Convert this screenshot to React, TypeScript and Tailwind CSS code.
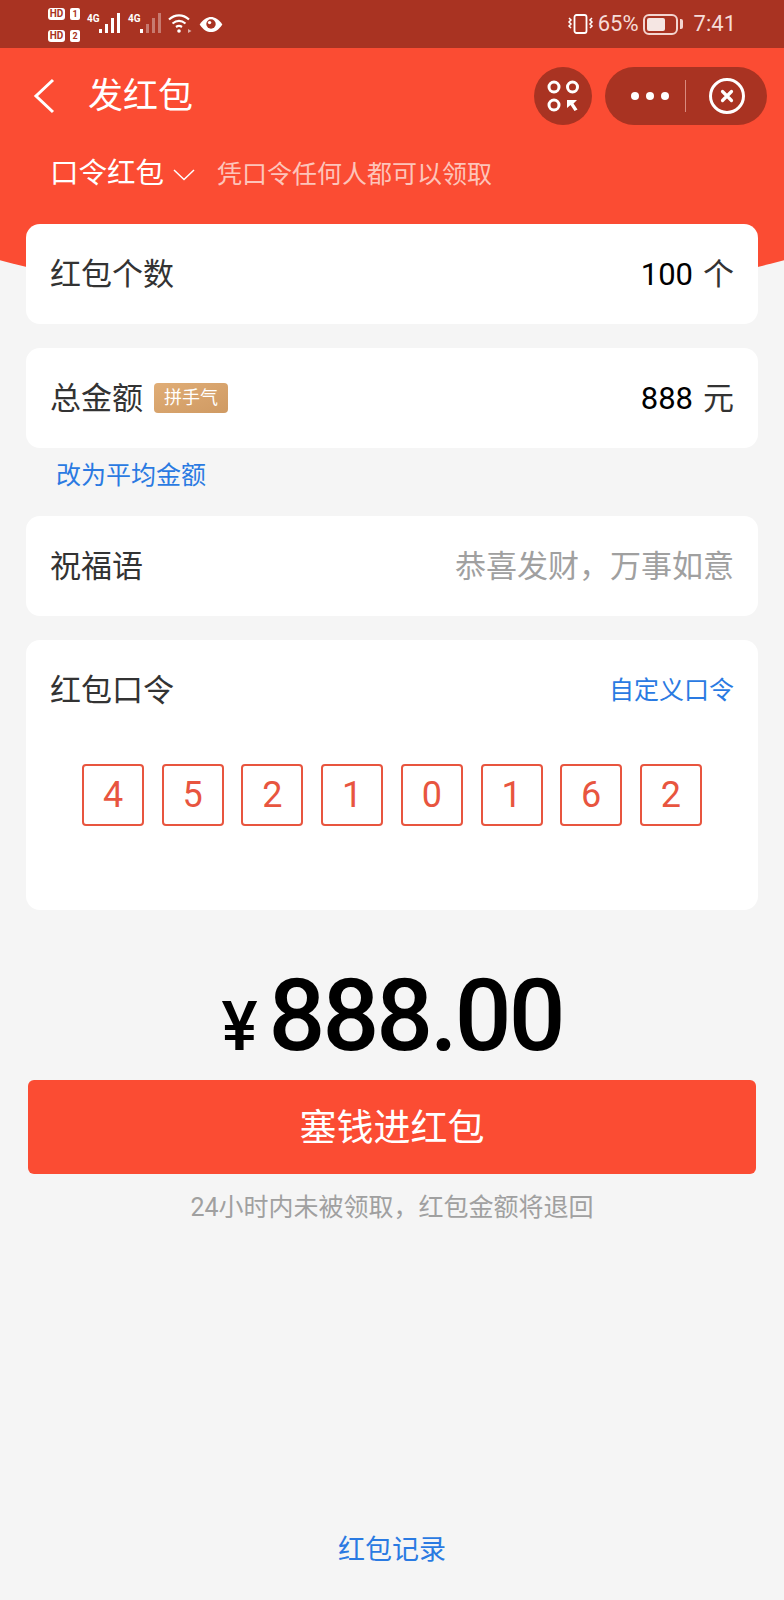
import React from 'react'

const cjk = { fontFamily: 'Roboto, "Noto Sans CJK SC", sans-serif' }

function SignalBars({ dim }: { dim?: boolean }) {
  const heights = [4, 9, 15, 20]
  return (
    <div className="flex items-end gap-[3px] h-[20px]">
      {heights.map((h, i) => (
        <svg key={i} width="3" height={h} className="block">
          <rect width="3" height={h} fill="#fff" opacity={dim && i > 0 ? 0.35 : 1} />
        </svg>
      ))}
    </div>
  )
}

function Simcard({ n }: { n: string }) {
  return (
    <div className="flex items-center gap-[5px] h-[12px]">
      <span className="flex items-center justify-center w-[17px] h-[12px] bg-white rounded-[3px] text-[10px] leading-none font-bold text-[#a93322]">HD</span>
      <span className="flex items-center justify-center w-[10px] h-[12px] bg-white rounded-[2px] text-[9px] leading-none font-bold text-[#a93322]">{n}</span>
    </div>
  )
}

function StatusBar() {
  return (
    <div className="flex items-center h-12 bg-[#a93322] pl-[48px] pr-[48px] text-white">
      <div className="flex flex-col gap-[10px] mt-[2px]">
        <Simcard n="1" />
        <Simcard n="2" />
      </div>
      <div className="flex items-end h-[20px] ml-[7px] mb-[2px]">
        <span className="w-[12px] text-[10px] leading-none font-bold self-start mt-[1px]">4G</span>
        <SignalBars />
      </div>
      <div className="flex items-end h-[20px] ml-[8px] mb-[2px]">
        <span className="w-[12px] text-[10px] leading-none font-bold self-start mt-[1px]">4G</span>
        <SignalBars dim />
      </div>
      <svg width="24" height="20" viewBox="0 0 24 20" className="ml-[7px] mb-[2px]" fill="none" stroke="#fff" strokeWidth="2.200">
        <path d="M1 6.500c6-5.500 14-5.500 20 0" />
        <path d="M4.500 10.500c4-3.200 9-3.200 13 0" />
        <path d="M8 14c2-1.400 4-1.400 6 0" />
        <circle cx="11" cy="18" r="1.800" fill="#fff" stroke="none" />
        <path d="M20 16l3.500 2-3.500 2z" fill="#fff" stroke="none" opacity="0.6" />
      </svg>
      <svg width="26" height="17" viewBox="0 0 26 18" className="ml-[6px] mb-[-1px]">
        <path d="M1 9C5 3 9 1 13 1s8 2 12 8c-4 6-8 8-12 8S5 15 1 9z" fill="#fff" />
        <circle cx="13" cy="8.500" r="5" fill="#a93322" />
        <circle cx="11.500" cy="7" r="1.800" fill="#fff" />
      </svg>
      <div className="ml-auto flex items-center">
        <svg width="27" height="20" viewBox="0 0 27 20" fill="none" stroke="#fff" strokeWidth="1.500">
          <rect x="7.500" y="1" width="12" height="18" rx="2" strokeWidth="1.800" />
          <path d="M2 4l2 2-2 2 2 2-2 2 2 2M25 4l-2 2 2 2-2 2 2 2-2 2" />
        </svg>
        <span className="ml-[4px] text-[22px] leading-none text-[#f6dcd8]" style={cjk}>65%</span>
        <div className="ml-[4px] flex items-center">
          <div className="w-[35px] h-[21px] border-2 border-[#f3d5d0] rounded-[6px] p-[2px]">
            <div className="w-[70%] h-full bg-[#f5e6e3] rounded-[2px]" />
          </div>
          <div className="w-[3px] h-[10px] ml-[2px] bg-[#f3d5d0] rounded-r-[2px]" />
        </div>
        <span className="ml-[11px] text-[22px] leading-none text-[#f6dcd8]" style={cjk}>7:41</span>
      </div>
    </div>
  )
}

function NavBar() {
  return (
    <div className="flex items-center h-24 pl-[33px] pr-[17px]">
      <svg width="22" height="36" viewBox="0 0 22 36" fill="none" stroke="#fff" strokeWidth="3">
        <path d="M20 2L3 18l17 16" />
      </svg>
      <h1 className="ml-[33px] text-[35px] leading-none text-white font-normal">发红包</h1>
      <div className="ml-auto flex items-center gap-[13px]">
        <div className="flex items-center justify-center w-[58px] h-[58px] rounded-full bg-[#a93322]">
          <svg width="32" height="32" viewBox="0 0 32 32" fill="none" stroke="#fff" strokeWidth="3">
            <circle cx="7" cy="7" r="5" />
            <circle cx="25.500" cy="7" r="5" />
            <circle cx="7" cy="25" r="5" />
            <path d="M20 20h10l-3.500 3.500 4 6-3 1.500-4-6L20 28z" fill="#fff" stroke="none" />
          </svg>
        </div>
        <div className="flex items-center w-[162px] h-[58px] rounded-full bg-[#a93322]">
          <div className="flex items-center gap-[7px] ml-[26px]">
            <span className="w-[8px] h-[8px] rounded-full bg-white" />
            <span className="w-[8px] h-[8px] rounded-full bg-white" />
            <span className="w-[8px] h-[8px] rounded-full bg-white" />
          </div>
          <div className="w-px h-[32px] bg-[#d98b7f] ml-[16px]" />
          <svg width="36" height="36" viewBox="0 0 36 36" fill="none" stroke="#fff" className="ml-[23px]">
            <circle cx="18" cy="18" r="16.500" strokeWidth="3" />
            <path d="M13.500 13.500l9 9M22.500 13.500l-9 9" strokeWidth="3.200" strokeLinecap="round" />
          </svg>
        </div>
      </div>
    </div>
  )
}

function Row({ label, children }: { label: React.ReactNode; children: React.ReactNode }) {
  return (
    <div className="flex items-center justify-between h-[100px] pl-[24px] pr-[24px] bg-white rounded-[14px]">
      <div className="flex items-center text-[31px] leading-none text-[#333]">{label}</div>
      <div className="flex items-center text-[31px] leading-none text-black">{children}</div>
    </div>
  )
}

const code = ['4', '5', '2', '1', '0', '1', '6', '2']

export default function App() {
  return (
    <div className="relative w-[784px] h-[1600px] overflow-hidden bg-[#f5f5f5]" style={cjk}>
      {/* red curved backdrop */}
      <div className="absolute top-[-70px] left-[-208px] w-[1200px] h-[376px] rounded-[50%] bg-[#fb4c33]" />

      <div className="relative">
        <StatusBar />
        <NavBar />

        <div className="flex items-center h-[60px] pl-[50px]">
          <span className="text-[28.500px] leading-none text-white">口令红包</span>
          <svg width="22" height="12" viewBox="0 0 22 12" fill="none" stroke="#fff" strokeWidth="1.500" className="ml-[9px] mt-[2px]">
            <path d="M1 1l10 9.500L21 1" />
          </svg>
          <span className="ml-[22px] text-[25px] leading-none text-[#fdc4ba]">凭口令任何人都可以领取</span>
        </div>

        <div className="mt-5 px-[26px]">
          <Row label="红包个数">
            <span>100</span>
            <span className="ml-[10px] text-[#333]">个</span>
          </Row>

          <div className="mt-6">
            <Row
              label={
                <>
                  <span>总金额</span>
                  <span className="flex items-center justify-center ml-[11px] mt-[-1px] w-[74px] h-[30px] rounded-[4px] bg-gradient-to-br from-[#e0ad76] to-[#cf9a63] text-[18px] leading-none text-white">拼手气</span>
                </>
              }
            >
              <span>888</span>
              <span className="ml-[10px] text-[#333]">元</span>
            </Row>
            <div className="h-[68px] pl-[30px] pt-[15px] text-[25px] leading-[26px] text-[#2a7ae2]">改为平均金额</div>
          </div>

          <Row label="祝福语">
            <span className="text-[#a0a0a0]">恭喜发财，万事如意</span>
          </Row>

          <div className="mt-6 h-[270px] pl-[24px] pr-[24px] bg-white rounded-[14px]">
            <div className="flex items-center justify-between h-[100px]">
              <span className="text-[31px] leading-none text-[#333]">红包口令</span>
              <span className="text-[25px] leading-none text-[#2a7ae2]">自定义口令</span>
            </div>
            <div className="flex justify-between mt-[24px] pl-[32px] pr-[32px]">
              {code.map((c, i) => (
                <div
                  key={i}
                  className="flex items-center justify-center w-[62px] h-[62px] border-2 border-[#e8553f] rounded-[4px] text-[36px] leading-none text-[#e8553f]"
                >
                  {c}
                </div>
              ))}
            </div>
          </div>

          <div className="flex items-baseline justify-center h-[170px] pt-[56px] text-black">
            <span className="text-[68px] leading-[100px] font-medium">¥</span>
            <span className="ml-[11px] text-[100px] leading-[100px] font-medium tracking-[-3px]">888.00</span>
          </div>

          <button className="block w-[728px] h-[94px] mx-[2px] pt-[3px] rounded-[6px] bg-[#fb4c33] text-[37px] leading-none text-white">塞钱进红包</button>

          <p className="mt-[21px] text-center text-[25px] leading-[26px] text-[#a0a0a0]">24小时内未被领取，红包金额将退回</p>
        </div>

        <p className="mt-[315px] text-center text-[27px] leading-[28px] text-[#2a7ae2]">红包记录</p>
      </div>
    </div>
  )
}
